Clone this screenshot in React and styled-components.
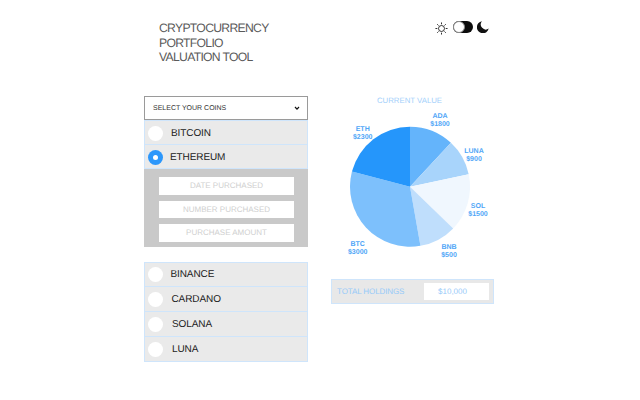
import React from "react";
import styled, { createGlobalStyle } from "styled-components";

const Global = createGlobalStyle`
  html, body { margin: 0; padding: 0; background: #fff; }
  body { font-family: "Liberation Sans", Arial, sans-serif; text-rendering: geometricPrecision; }
`;

const Page = styled.div`
  width: 640px;
  height: 400px;
  box-sizing: border-box;
  padding: 0 146px 0 144px;
  overflow: hidden;
`;
const Header = styled.header`
  height: 96px;
  display: flex;
  justify-content: space-between;
  align-items: flex-start;
`;
const Title = styled.h1`
  margin: 21px 0 0 15px;
  font-size: 12.2px;
  line-height: 14.5px;
  font-weight: 400;
  letter-spacing: -0.7px;
  color: #5a5a5a;
  width: 115px;
`;
const ThemeSwitch = styled.div`
  display: flex;
  align-items: flex-start;
  margin-top: 21px;
  margin-right: 5.5px;
`;
const SunIcon = styled.svg`
  margin: 1px 4.7px 0 0;
`;
const MoonIcon = styled.svg`
  margin-left: 3.4px;
`;
const Toggle = styled.div`
  position: relative;
  width: 20px;
  height: 12px;
  border-radius: 6px;
  background: #0c0c0c;
  &::after {
    content: "";
    position: absolute;
    left: 0;
    top: 0;
    width: 12px;
    height: 12px;
    box-sizing: border-box;
    border-radius: 50%;
    border: 1px solid #8a8a8a;
    background: #fff;
  }
`;
const Main = styled.main`
  display: grid;
  grid-template-columns: 164px 163px;
  column-gap: 23px;
  align-items: start;
`;
const LeftColumn = styled.div`
  display: flex;
  flex-direction: column;
`;
const Select = styled.div`
  height: 24px;
  box-sizing: border-box;
  border: 1px solid #9a9a9a;
  background: #fff;
  display: flex;
  align-items: center;
  justify-content: space-between;
  padding: 0 7px 0 8px;
  font-size: 7px;
  color: #333;
`;
const CoinList = styled.div`
  display: flex;
  flex-direction: column;
  margin-top: ${(p) => p.$top || 0}px;
`;
const CoinRow = styled.div`
  height: ${(p) => p.$h}px;
  box-sizing: border-box;
  background: #eaeaea;
  border: 1px solid #cfe5fb;
  border-top-width: ${(p) => (p.$first ? 1 : 0)}px;
  display: flex;
  align-items: center;
  padding: 1px 0 0 3px;
  font-size: 10px;
  letter-spacing: -0.1px;
  color: #222;
`;
const Radio = styled.span`
  width: 15px;
  height: 15px;
  border-radius: 50%;
  background: ${(p) => (p.$on ? "#2c97fb" : "#fff")};
  display: flex;
  align-items: center;
  justify-content: center;
  margin-right: ${(p) => p.$gap}px;
  flex: none;
  &::after {
    content: "";
    display: ${(p) => (p.$on ? "block" : "none")};
    width: 5px;
    height: 5px;
    border-radius: 50%;
    background: #fff;
  }
`;
const Details = styled.div`
  background: #c9c9c9;
  height: 78px;
  box-sizing: border-box;
  padding: 8px 14px 0 15px;
  display: flex;
  flex-direction: column;
  gap: 6px;
`;
const Field = styled.div`
  height: 17.5px;
  background: #fff;
  color: #cfcfcf;
  font-size: 8px;
  display: flex;
  align-items: center;
  justify-content: center;
`;
const RightColumn = styled.div`
  display: flex;
  flex-direction: column;
`;
const ChartTitle = styled.div`
  text-align: center;
  color: #a3d0fb;
  font-size: 7.8px;
  line-height: 10px;
  height: 10px;
  padding-right: 6px;
`;
const Chart = styled.svg`
  display: block;
  width: 163px;
  height: 173px;
`;
const ChartLabel = styled.text`
  font-size: 7px;
  font-weight: 700;
  font-family: "Liberation Sans", Arial, sans-serif;
  fill: #4fa6f7;
  text-anchor: middle;
`;
const Holdings = styled.div`
  height: 25px;
  box-sizing: border-box;
  background: #e8e8e8;
  border: 1px solid #cfe5fb;
  display: flex;
  align-items: center;
  justify-content: space-between;
  padding: 0 4px 0 5px;
  font-size: 8px;
  letter-spacing: -0.1px;
  color: #97caf9;
`;
const HoldingsValue = styled.div`
  width: 65px;
  height: 16.5px;
  box-sizing: border-box;
  padding-right: 8px;
  background: #fff;
  display: flex;
  align-items: center;
  justify-content: center;
  letter-spacing: 0;
`;

const CX = 79, CY = 80.7, R = 60;
const pt = (a) => {
  const t = (a * Math.PI) / 180;
  return [CX + R * Math.sin(t), CY - R * Math.cos(t)];
};
const slices = [
  [0, 43, "#64b4fb"],
  [43, 78, "#a8d4fb"],
  [78, 134, "#f0f7fe"],
  [134, 170, "#bfdefc"],
  [170, 284.6, "#7dc0fc"],
  [284.6, 360, "#2596fb"],
];
const labels = [
  ["ADA", "$1800", 109, 11.5],
  ["LUNA", "$900", 143, 46.5],
  ["SOL", "$1500", 147, 101.7],
  ["BNB", "$500", 118, 143],
  ["BTC", "$3000", 26.7, 140],
  ["ETH", "$2300", 31.7, 24.7],
];

const Sun = () => (
  <SunIcon width="13" height="13" viewBox="0 0 14 14" fill="none" stroke="#222" strokeWidth="1">
    <circle cx="7" cy="7" r="3.2" />
    <path d="M7 0.5v2M7 11.5v2M0.5 7h2M11.5 7h2M2.4 2.4l1.4 1.4M10.2 10.2l1.4 1.4M2.4 11.6l1.4-1.4M10.2 3.8l1.4-1.4" />
  </SunIcon>
);
const Moon = () => (
  <MoonIcon width="12" height="12" viewBox="0 0 12 12">
    <path d="M5 0.3A6 6 0 1 0 11.7 7.6A5 5 0 0 1 5 0.3Z" fill="#111" />
  </MoonIcon>
);
const Chevron = () => (
  <svg width="6" height="5" viewBox="0 0 6 5" fill="none" stroke="#111" strokeWidth="1.2">
    <path d="M1 1l2 2.2L5 1" />
  </svg>
);

const Coin = ({ name, gap, first, on, h }) => (
  <CoinRow $first={first} $h={h}>
    <Radio $on={on} $gap={gap} />
    {name}
  </CoinRow>
);

export default function App() {
  return (
    <Page>
      <Global />
      <Header>
        <Title>CRYPTOCURRENCY PORTFOLIO VALUATION TOOL</Title>
        <ThemeSwitch>
          <Sun />
          <Toggle />
          <Moon />
        </ThemeSwitch>
      </Header>
      <Main>
        <LeftColumn>
          <Select>
            SELECT YOUR COINS
            <Chevron />
          </Select>
          <CoinList>
            <Coin name="BITCOIN" gap={8} h={25} first />
            <Coin name="ETHEREUM" gap={7} h={24} on />
          </CoinList>
          <Details>
            <Field>DATE PURCHASED</Field>
            <Field>NUMBER PURCHASED</Field>
            <Field>PURCHASE AMOUNT</Field>
          </Details>
          <CoinList $top={14.7}>
            <Coin name="BINANCE" gap={7.5} h={25} first />
            <Coin name="CARDANO" gap={8.5} h={25} />
            <Coin name="SOLANA" gap={9} h={25} />
            <Coin name="LUNA" gap={9} h={25} />
          </CoinList>
        </LeftColumn>
        <RightColumn>
          <ChartTitle>CURRENT VALUE</ChartTitle>
          <Chart viewBox="0 0 163 173">
            {slices.map(([a, b, c]) => {
              const [x1, y1] = pt(a);
              const [x2, y2] = pt(b);
              return (
                <path
                  key={a}
                  fill={c}
                  d={`M${CX} ${CY}L${x1} ${y1}A${R} ${R} 0 ${b - a > 180 ? 1 : 0} 1 ${x2} ${y2}Z`}
                />
              );
            })}
            {labels.map(([n, v, x, y]) => (
              <ChartLabel key={n} x={x} y={y}>
                <tspan x={x}>{n}</tspan>
                <tspan x={x} dy="8">{v}</tspan>
              </ChartLabel>
            ))}
          </Chart>
          <Holdings>
            TOTAL HOLDINGS
            <HoldingsValue>$10,000</HoldingsValue>
          </Holdings>
        </RightColumn>
      </Main>
    </Page>
  );
}
